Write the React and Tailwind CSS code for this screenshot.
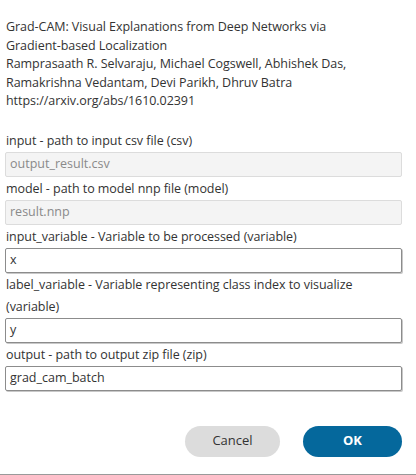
const fields = [
  { label: "input - path to input csv file (csv)", value: "output_result.csv", disabled: true },
  { label: "model - path to model nnp file (model)", value: "result.nnp", disabled: true },
  { label: "input_variable - Variable to be processed (variable)", value: "x" },
  {
    label: "label_variable - Variable representing class index to visualize (variable)",
    value: "y",
  },
  { label: "output - path to output zip file (zip)", value: "grad_cam_batch" },
];

const App = () => {
  return (
    <div
      className="w-[416px] h-[475px] bg-white text-[#333] border-b border-[#9a9a9a] overflow-hidden"
      style={{ fontFamily: '"Open Sans", "Noto Sans", sans-serif' }}
    >
      <div className="pl-[6px] pr-[14px] pt-[18px]">
        {/* Description */}
        <p className="text-[12.5px] leading-[18.5px] tracking-[-0.05px]">
          Grad-CAM: Visual Explanations from Deep Networks via
          <br />
          Gradient-based Localization
          <br />
          Ramprasaath R. Selvaraju, Michael Cogswell, Abhishek Das,
          <br />
          Ramakrishna Vedantam, Devi Parikh, Dhruv Batra
          <br />
          https://arxiv.org/abs/1610.02391
        </p>

        {/* Fields */}
        <div className="mt-[19px]">
          {fields.map((f) => (
            <div key={f.label} className="mb-px">
              <div className="text-[12.5px] leading-[22px] tracking-[-0.05px] pr-2">{f.label}</div>
              <div
                className={
                  f.disabled
                    ? "-ml-px w-[397px] h-[25px] flex items-center px-[4px] text-[12.5px] bg-[#f4f4f4] text-[#8a8a8a] border border-[#dcdcdc] rounded-[2px]"
                    : "-ml-px w-[397px] h-[25px] flex items-center px-[4px] text-[12.5px] bg-white text-[#333] border border-[#8c8c8c] rounded-[2px] shadow-[1px_1px_0_#c8c8c8]"
                }
              >
                {f.value}
              </div>
            </div>
          ))}
        </div>

        {/* Buttons */}
        <div className="flex justify-end gap-[23px] mt-[35px]">
          <button className="w-[95px] h-[31px] rounded-full bg-[#dcdcdc] text-[13px] text-[#333]">
            Cancel
          </button>
          <button className="w-[99px] h-[31px] rounded-full bg-[#05689c] text-[13px] font-bold text-white">
            OK
          </button>
        </div>
      </div>
    </div>
  );
};

export default App;
